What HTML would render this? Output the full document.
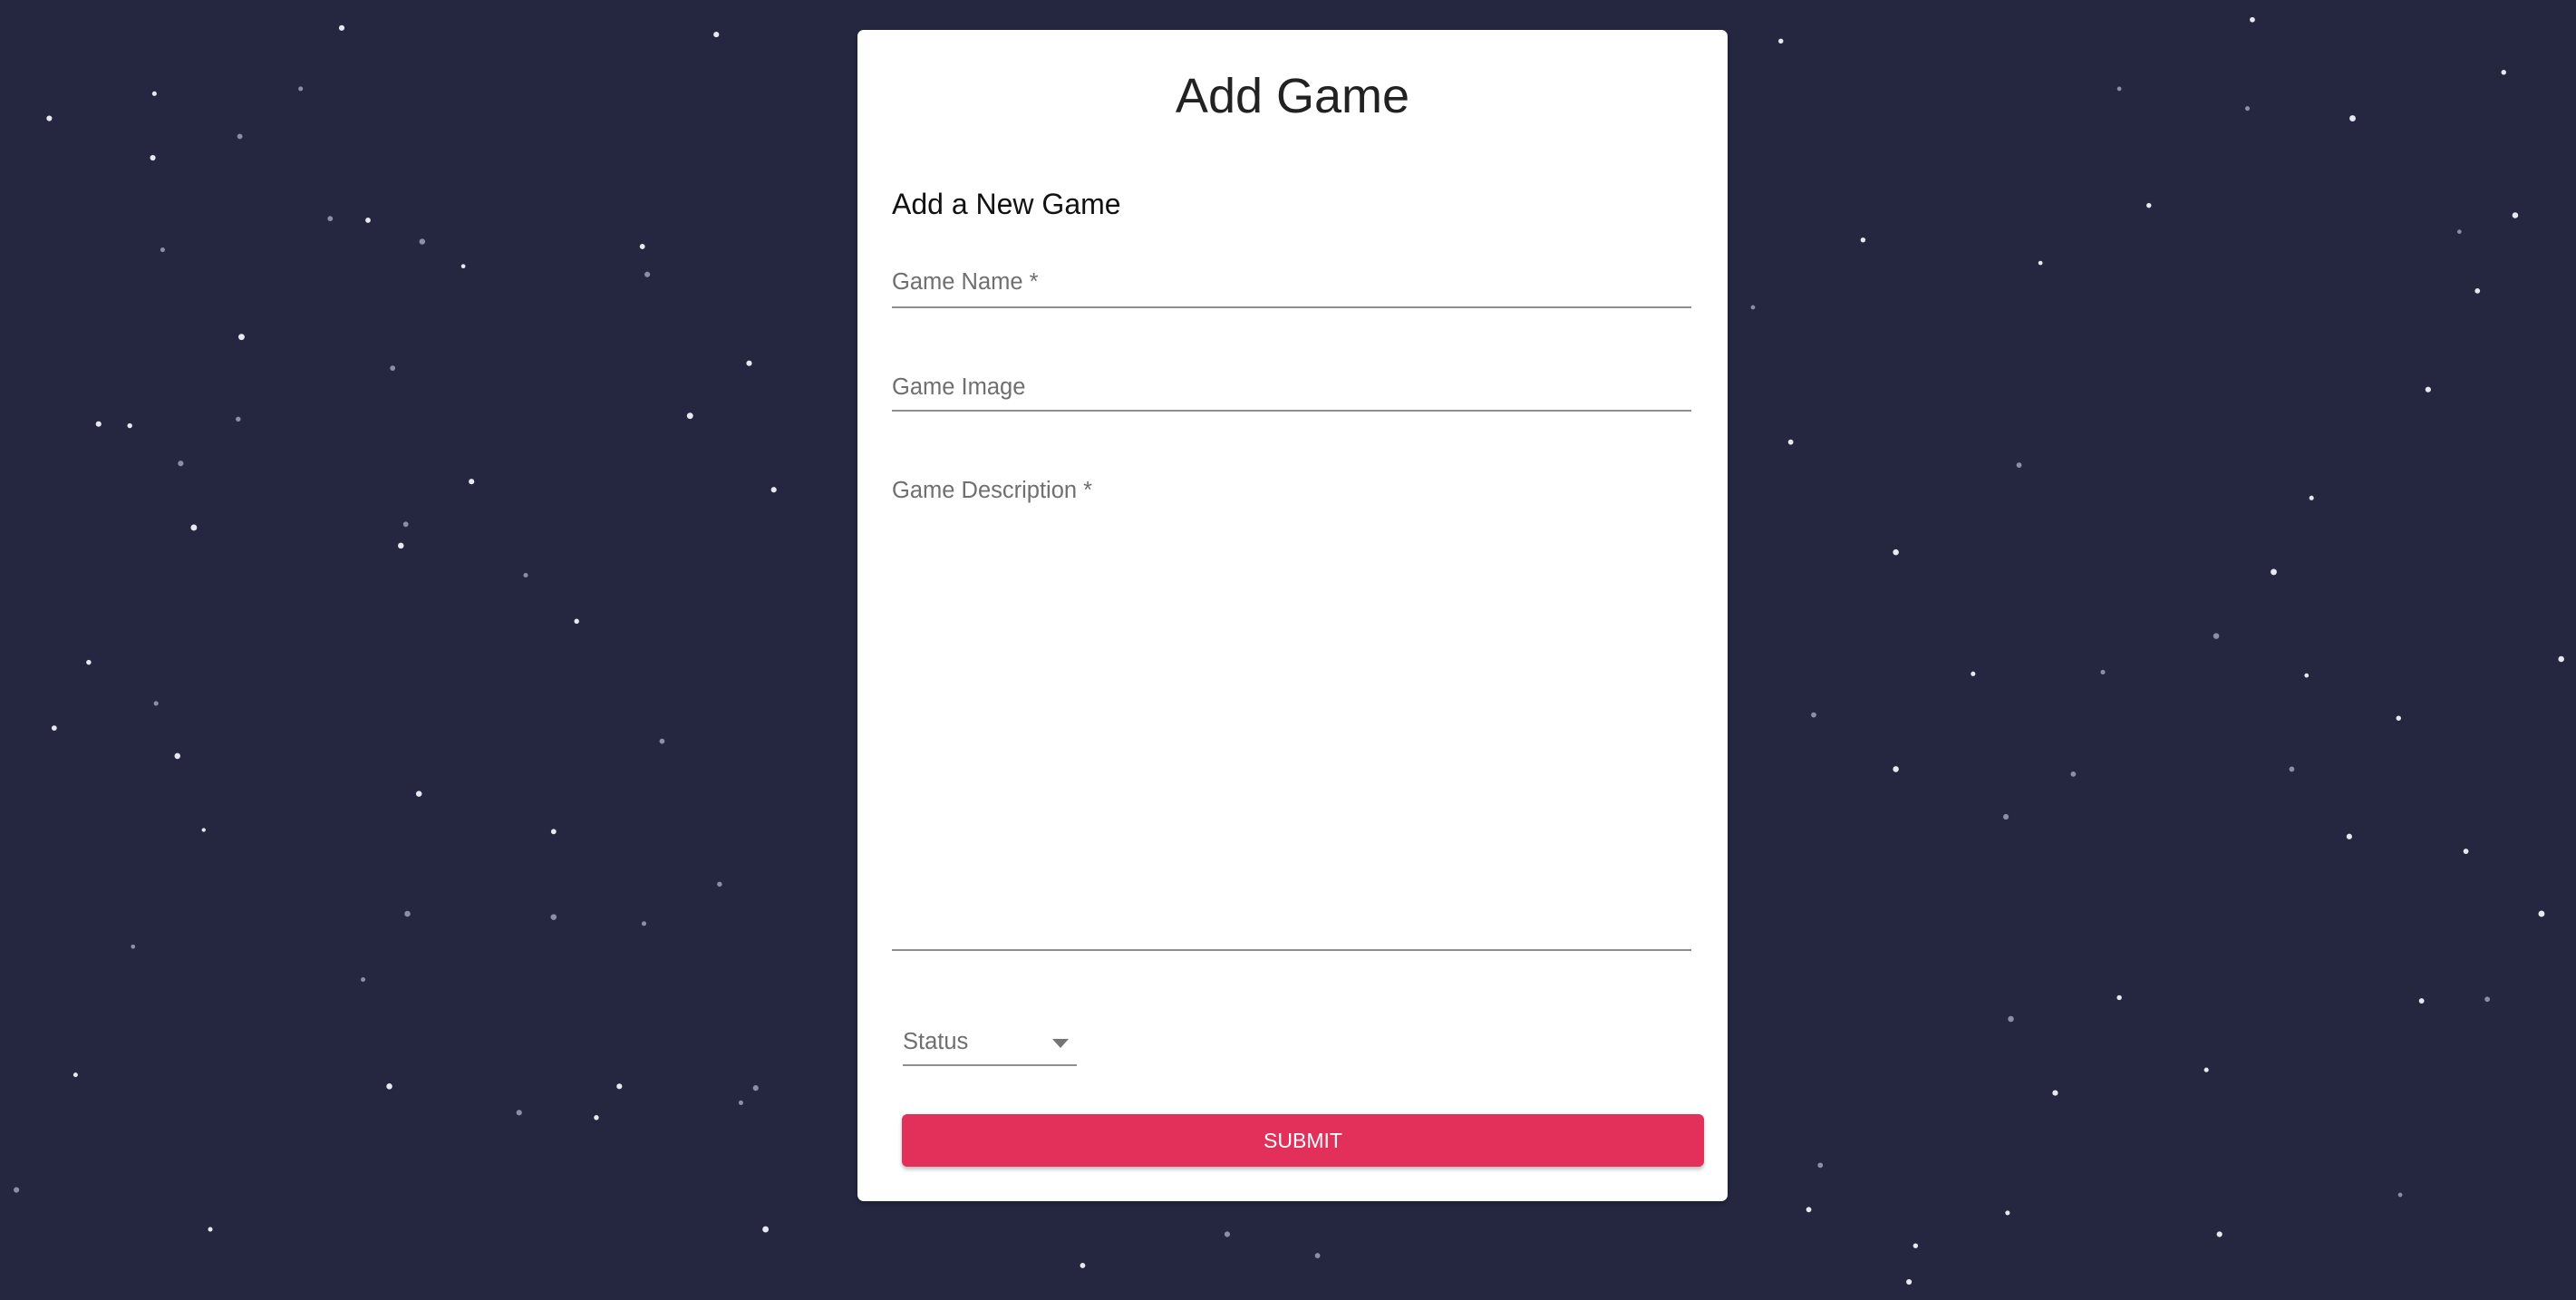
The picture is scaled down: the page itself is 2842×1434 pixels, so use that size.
<!DOCTYPE html>
<html><head><meta charset="utf-8"><style>
html,body{margin:0;padding:0;width:2842px;height:1434px;overflow:hidden;background:#252741;font-family:"Liberation Sans",Arial,sans-serif}
svg.bg{position:absolute;left:0;top:0}
.card{position:absolute;left:946px;top:33px;width:960px;height:1292px;background:#fff;border-radius:7px;box-shadow:0 2px 4px rgba(0,0,0,.3)}
.t{position:absolute;left:0;right:0;top:42px;text-align:center;font-size:54px;color:#222}
.h6{position:absolute;left:38px;top:174px;font-size:32px;color:#111}
.lab{position:absolute;left:38px;font-size:25.5px;color:#6f6f6f}
.line{position:absolute;left:38px;width:882px;height:2px;background:#8e8e8e}
.btn{position:absolute;left:49px;top:1196px;width:885px;height:58px;background:#e2305b;border-radius:6px;box-shadow:0 3px 4px rgba(0,0,0,.25);color:#fff;font-size:23px;text-align:center;line-height:58px}
</style></head><body>
<svg class="bg" width="2842" height="1434" viewBox="0 0 1568 791" preserveAspectRatio="none">
<g fill="#e8e8f0">
<circle cx="30" cy="72" r="1.7"/><circle cx="93" cy="96" r="1.7"/><circle cx="94" cy="57" r="1.4"/><circle cx="208" cy="17" r="1.7"/><circle cx="436" cy="21" r="1.7"/><circle cx="147" cy="205" r="1.9"/><circle cx="79" cy="259" r="1.5"/><circle cx="420" cy="253" r="1.9"/><circle cx="456" cy="221" r="1.7"/><circle cx="471" cy="298" r="1.7"/><circle cx="287" cy="293" r="1.7"/><circle cx="244" cy="332" r="1.8"/><circle cx="282" cy="162" r="1.3"/><circle cx="108" cy="460" r="1.8"/><circle cx="33" cy="443" r="1.6"/><circle cx="337" cy="506" r="1.6"/><circle cx="351" cy="378" r="1.5"/><circle cx="237" cy="661" r="1.8"/><circle cx="377" cy="661" r="1.7"/><circle cx="363" cy="680" r="1.5"/><circle cx="466" cy="748" r="1.9"/><circle cx="659" cy="770" r="1.6"/><circle cx="128" cy="748" r="1.4"/><circle cx="46" cy="654" r="1.4"/><circle cx="1084" cy="25" r="1.5"/><circle cx="1371" cy="12" r="1.6"/><circle cx="1432" cy="72" r="1.9"/><circle cx="1531" cy="131" r="1.8"/><circle cx="1524" cy="44" r="1.5"/><circle cx="1478" cy="237" r="1.7"/><circle cx="1508" cy="177" r="1.6"/><circle cx="1090" cy="269" r="1.6"/><circle cx="1154" cy="336" r="1.8"/><circle cx="1407" cy="303" r="1.4"/><circle cx="1384" cy="348" r="1.9"/><circle cx="1404" cy="411" r="1.3"/><circle cx="1460" cy="437" r="1.5"/><circle cx="1154" cy="468" r="1.8"/><circle cx="1430" cy="509" r="1.7"/><circle cx="1501" cy="518" r="1.6"/><circle cx="1547" cy="556" r="1.9"/><circle cx="1290" cy="607" r="1.5"/><circle cx="1251" cy="665" r="1.7"/><circle cx="1343" cy="651" r="1.4"/><circle cx="1351" cy="751" r="1.7"/><circle cx="1166" cy="758" r="1.5"/><circle cx="1162" cy="780" r="1.7"/><circle cx="1101" cy="736" r="1.6"/><circle cx="1222" cy="738" r="1.4"/><circle cx="1474" cy="609" r="1.6"/><circle cx="1559" cy="401" r="1.8"/><circle cx="1201" cy="410" r="1.4"/><circle cx="1242" cy="160" r="1.3"/><circle cx="1308" cy="125" r="1.5"/><circle cx="1134" cy="146" r="1.5"/><circle cx="224" cy="134" r="1.6"/><circle cx="391" cy="150" r="1.6"/><circle cx="60" cy="258" r="1.7"/><circle cx="118" cy="321" r="1.9"/><circle cx="54" cy="403" r="1.5"/><circle cx="255" cy="483" r="1.8"/><circle cx="124" cy="505" r="1.2"/>
</g>
<g fill="#8c8ea4">
<circle cx="146" cy="83" r="1.6"/><circle cx="201" cy="133" r="1.6"/><circle cx="257" cy="147" r="1.8"/><circle cx="239" cy="224" r="1.6"/><circle cx="110" cy="282" r="1.7"/><circle cx="145" cy="255" r="1.5"/><circle cx="247" cy="319" r="1.6"/><circle cx="320" cy="350" r="1.4"/><circle cx="95" cy="428" r="1.4"/><circle cx="248" cy="556" r="1.8"/><circle cx="337" cy="558" r="1.8"/><circle cx="403" cy="451" r="1.6"/><circle cx="316" cy="677" r="1.7"/><circle cx="438" cy="538" r="1.5"/><circle cx="183" cy="54" r="1.4"/><circle cx="99" cy="152" r="1.4"/><circle cx="394" cy="167" r="1.7"/><circle cx="1349" cy="387" r="1.8"/><circle cx="1262" cy="471" r="1.6"/><circle cx="1221" cy="497" r="1.7"/><circle cx="1395" cy="468" r="1.6"/><circle cx="1229" cy="283" r="1.6"/><circle cx="1280" cy="409" r="1.4"/><circle cx="1514" cy="608" r="1.6"/><circle cx="1224" cy="620" r="1.8"/><circle cx="1368" cy="66" r="1.4"/><circle cx="1290" cy="54" r="1.3"/><circle cx="1497" cy="141" r="1.3"/><circle cx="1067" cy="187" r="1.3"/><circle cx="1108" cy="709" r="1.6"/><circle cx="1461" cy="727" r="1.3"/><circle cx="747" cy="751" r="1.7"/><circle cx="802" cy="764" r="1.6"/><circle cx="10" cy="724" r="1.7"/><circle cx="460" cy="662" r="1.7"/><circle cx="451" cy="671" r="1.4"/><circle cx="392" cy="562" r="1.4"/><circle cx="221" cy="596" r="1.4"/><circle cx="81" cy="576" r="1.3"/><circle cx="1104" cy="435" r="1.6"/>
</g>
</svg>
<div class="card">
<div class="t">Add Game</div>
<div class="h6">Add a New Game</div>
<div class="lab" style="top:264px">Game Name *</div>
<div class="line" style="top:305px"></div>
<div class="lab" style="top:380px">Game Image</div>
<div class="line" style="top:419px"></div>
<div class="lab" style="top:494px">Game Description *</div>
<div class="line" style="top:1014px"></div>
<div class="lab" style="left:50px;top:1102px">Status</div>
<svg style="position:absolute;left:214px;top:1112px" width="20" height="12"><path d="M1 1h18L10 11z" fill="#757575"/></svg>
<div style="position:absolute;left:50px;top:1141px;width:192px;height:2px;background:#8e8e8e"></div>
<div class="btn">SUBMIT</div>
</div>
</body></html>
